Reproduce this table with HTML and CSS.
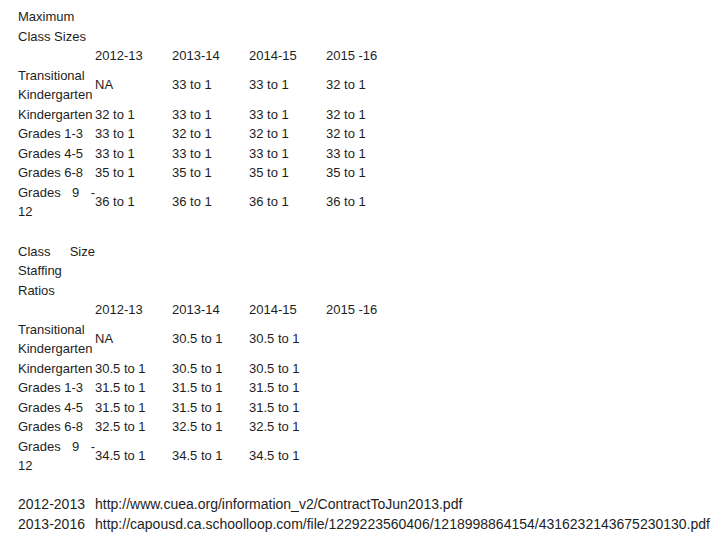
FILE: index.html
```html
<!DOCTYPE html>
<html>
<head>
<meta charset="utf-8">
<link rel="stylesheet" href="styles.css">
</head>
<body>
<div class="page">
  <table class="sizes">
    <colgroup><col class="c"><col class="c"><col class="c"><col class="c"><col class="c"></colgroup>
    <tr><td>Maximum Class Sizes</td><td></td><td></td><td></td><td></td></tr>
    <tr><td></td><td>2012-13</td><td>2013-14</td><td>2014-15</td><td>2015 -16</td></tr>
    <tr><td>Transitional Kindergarten</td><td>NA</td><td>33 to 1</td><td>33 to 1</td><td>32 to 1</td></tr>
    <tr><td>Kindergarten</td><td>32 to 1</td><td>33 to 1</td><td>33 to 1</td><td>32 to 1</td></tr>
    <tr><td>Grades 1-3</td><td>33 to 1</td><td>32 to 1</td><td>32 to 1</td><td>32 to 1</td></tr>
    <tr><td>Grades 4-5</td><td>33 to 1</td><td>33 to 1</td><td>33 to 1</td><td>33 to 1</td></tr>
    <tr><td>Grades 6-8</td><td>35 to 1</td><td>35 to 1</td><td>35 to 1</td><td>35 to 1</td></tr>
    <tr><td>Grades 9 - 12</td><td>36 to 1</td><td>36 to 1</td><td>36 to 1</td><td>36 to 1</td></tr>
  </table>
  <div class="blank"></div>
  <table class="sizes">
    <colgroup><col class="c"><col class="c"><col class="c"><col class="c"><col class="c"></colgroup>
    <tr><td>Class Size Staffing Ratios</td><td></td><td></td><td></td><td></td></tr>
    <tr><td></td><td>2012-13</td><td>2013-14</td><td>2014-15</td><td>2015 -16</td></tr>
    <tr><td>Transitional Kindergarten</td><td>NA</td><td>30.5 to 1</td><td>30.5 to 1</td><td></td></tr>
    <tr><td>Kindergarten</td><td>30.5 to 1</td><td>30.5 to 1</td><td>30.5 to 1</td><td></td></tr>
    <tr><td>Grades 1-3</td><td>31.5 to 1</td><td>31.5 to 1</td><td>31.5 to 1</td><td></td></tr>
    <tr><td>Grades 4-5</td><td>31.5 to 1</td><td>31.5 to 1</td><td>31.5 to 1</td><td></td></tr>
    <tr><td>Grades 6-8</td><td>32.5 to 1</td><td>32.5 to 1</td><td>32.5 to 1</td><td></td></tr>
    <tr><td>Grades 9 - 12</td><td>34.5 to 1</td><td>34.5 to 1</td><td>34.5 to 1</td><td></td></tr>
  </table>
  <div class="blank blank-short"></div>
  <div class="sources">
    <span>2012-2013</span><span>http://www.cuea.org/information_v2/ContractToJun2013.pdf</span>
    <span>2013-2016</span><span>http://capousd.ca.schoolloop.com/file/1229223560406/1218998864154/4316232143675230130.pdf</span>
  </div>
</div>
</body>
</html>
```

FILE: styles.css
```css
html, body {
  margin: 0;
  padding: 0;
  background: #ffffff;
}
.page {
  padding: 7px 0 0 18px;
  font-family: "Liberation Sans", Arial, Helvetica, sans-serif;
  font-size: 13px;
  line-height: 19.5px;
  color: #1e1e1e;
}
.sizes {
  border-collapse: collapse;
  border-spacing: 0;
  table-layout: fixed;
  width: 385px;
}
.sizes .c {
  width: 77px;
}
.sizes td {
  padding: 0;
  vertical-align: middle;
  text-align: justify;
  word-wrap: break-word;
}
.blank {
  height: 20px;
}
.blank-short {
  height: 18px;
}
.sources {
  display: grid;
  grid-template-columns: 77px auto;
  font-size: 14px;
  line-height: 20px;
  white-space: nowrap;
}
```
